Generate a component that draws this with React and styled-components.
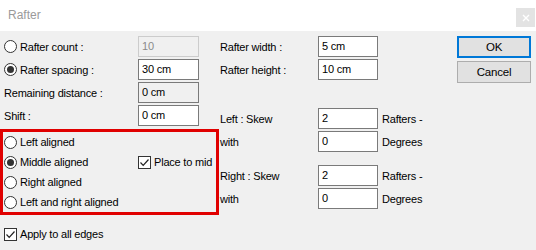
import React from "react";
import styled, { createGlobalStyle } from "styled-components";

const FONT = `"Liberation Sans", Arial, sans-serif`;

const GlobalStyle = createGlobalStyle`
    html, body {
        margin: 0;
        padding: 0;
        background: #f0f0f0;
    }
    body {
        font-family: ${FONT};
        font-size: 11px;
        letter-spacing: -0.2px;
        color: #000;
    }
`;

export default function App(){
    return (
        <Window>
            <GlobalStyle />
            <TitleBar>
                <Title>Rafter</Title>
                <CloseButton>
                    <svg width="8" height="8" viewBox="0 0 8 8">
                        <path d="M1 1L7 7M7 1L1 7" stroke="#fff" strokeWidth="1.4" />
                    </svg>
                </CloseButton>
            </TitleBar>

            <Body>
                <LeftColumn>
                    <FieldRow>
                        <Option><Radio /> Rafter count :</Option>
                        <Input value="10" disabled readOnly />
                    </FieldRow>
                    <FieldRow>
                        <Option><Radio checked /> Rafter spacing :</Option>
                        <Input value="30 cm" readOnly />
                    </FieldRow>
                    <FieldRow>
                        <PlainLabel>Remaining distance :</PlainLabel>
                        <Input value="0 cm" readOnly grey />
                    </FieldRow>
                    <FieldRow>
                        <PlainLabel>Shift :</PlainLabel>
                        <Input value="0 cm" readOnly />
                    </FieldRow>

                    <HighlightBox>
                        <OptionRow><Option><Radio /> Left aligned</Option></OptionRow>
                        <OptionRow>
                            <Option><Radio checked /> Middle aligned</Option>
                            <Option><CheckBox checked /> Place to mid</Option>
                        </OptionRow>
                        <OptionRow><Option><Radio /> Right aligned</Option></OptionRow>
                        <OptionRow><Option><Radio /> Left and right aligned</Option></OptionRow>
                    </HighlightBox>

                    <ApplyRow>
                        <Option><CheckBox checked /> Apply to all edges</Option>
                    </ApplyRow>
                </LeftColumn>

                <MiddleColumn>
                    <SizeRow>
                        <span>Rafter width :</span>
                        <Input value="5 cm" readOnly />
                    </SizeRow>
                    <SizeRow>
                        <span>Rafter height :</span>
                        <Input value="10 cm" readOnly />
                    </SizeRow>

                    <SizeRow spaced={28}>
                        <span>Left : Skew</span>
                        <Input value="2" readOnly />
                        <Unit>Rafters -</Unit>
                    </SizeRow>
                    <SizeRow>
                        <span>with</span>
                        <Input value="0" readOnly />
                        <Unit>Degrees</Unit>
                    </SizeRow>

                    <SizeRow spaced={13}>
                        <span>Right : Skew</span>
                        <Input value="2" readOnly />
                        <Unit>Rafters -</Unit>
                    </SizeRow>
                    <SizeRow>
                        <span>with</span>
                        <Input value="0" readOnly />
                        <Unit>Degrees</Unit>
                    </SizeRow>
                </MiddleColumn>

                <ButtonColumn>
                    <Button primary>OK</Button>
                    <Button>Cancel</Button>
                </ButtonColumn>
            </Body>
        </Window>
    );
}

function Radio({ checked }) {
    return <RadioCircle>{checked && <RadioDot />}</RadioCircle>;
}

function CheckBox({ checked }) {
    return (
        <CheckSquare>
            {checked && (
                <svg width="11" height="11" viewBox="0 0 11 11">
                    <path d="M1.5 5.5L4.2 8.3L9.5 2.5" fill="none" stroke="#222" strokeWidth="1.2" />
                </svg>
            )}
        </CheckSquare>
    );
}

const Window = styled.div`
    width: 536px;
    height: 250px;
    background: #f0f0f0;
    overflow: hidden;
`;

const TitleBar = styled.div`
    height: 31px;
    background: #fff;
    display: flex;
    align-items: center;
    justify-content: space-between;
    padding-left: 8px;
    box-sizing: border-box;
`;

const Title = styled.span`
    color: #9a9a9a;
    font-size: 12px;
    letter-spacing: 0;
    margin-top: -1px;
`;

const CloseButton = styled.div`
    width: 19px;
    height: 19px;
    background: #e3e3e3;
    display: flex;
    align-items: center;
    justify-content: center;
    margin-right: 1px;
    margin-top: 4px;
`;

const Body = styled.div`
    display: grid;
    grid-template-columns: 220px 237px 74px;
    padding-top: 5px;
`;

const LeftColumn = styled.div`
    width: 219px;
    display: flex;
    flex-direction: column;
    gap: 2px;
`;

const FieldRow = styled.div`
    display: grid;
    grid-template-columns: 138px 61px;
    align-items: center;
    height: 21px;
`;

const Option = styled.label`
    display: flex;
    align-items: center;
    gap: 3px;
    white-space: nowrap;
    padding-left: 4px;
`;

const PlainLabel = styled.span`
    padding-left: 4px;
`;

const Input = styled.input`
    all: unset;
    box-sizing: border-box;
    height: 21px;
    width: 100%;
    padding: 0 3px 2px;
    font-family: ${FONT};
    font-size: 11px;
    letter-spacing: -0.2px;
    color: ${(p) => (p.disabled ? "#8a8a8a" : "#000")};
    background: ${(p) => (p.disabled || p.grey ? "#f0f0f0" : "#fff")};
    border: 1px solid ${(p) => (p.disabled ? "#cccccc" : "#7a7a7a")};
`;

const RadioCircle = styled.span`
    box-sizing: border-box;
    width: 13px;
    height: 13px;
    border-radius: 50%;
    border: 1px solid #333;
    background: #fff;
    display: flex;
    align-items: center;
    justify-content: center;
    flex: none;
`;

const RadioDot = styled.span`
    width: 7px;
    height: 7px;
    border-radius: 50%;
    background: #333;
`;

const CheckSquare = styled.span`
    box-sizing: border-box;
    width: 13px;
    height: 13px;
    border: 1px solid #333;
    background: #fff;
    display: flex;
    align-items: center;
    justify-content: center;
    flex: none;
`;

const HighlightBox = styled.div`
    margin-top: 1px;
    border: 3px solid #e00000;
    display: flex;
    flex-direction: column;
`;

const OptionRow = styled.div`
    display: grid;
    grid-template-columns: 134px 1fr;
    align-items: center;
    height: 20px;
    margin-left: -3px;
`;

const ApplyRow = styled.div`
    height: 20px;
    display: flex;
    align-items: center;
    margin-top: 7px;
`;

const MiddleColumn = styled.div`
    display: flex;
    flex-direction: column;
`;

const SizeRow = styled.div`
    display: grid;
    grid-template-columns: 98px 60px auto;
    align-items: center;
    height: 21px;
    margin-top: ${(p) => (p.spaced ? p.spaced : 2)}px;
    &:first-child {
        margin-top: 0;
    }
`;

const Unit = styled.span`
    padding-left: 4px;
`;

const ButtonColumn = styled.div`
    display: flex;
    flex-direction: column;
    gap: 3px;
`;

const Button = styled.button`
    all: unset;
    box-sizing: border-box;
    height: 22px;
    width: 74px;
    text-align: center;
    font-family: ${FONT};
    font-size: 11.5px;
    background: #e1e1e1;
    border: ${(p) => (p.primary ? "2px solid #0078d7" : "1px solid #adadad")};
`;
